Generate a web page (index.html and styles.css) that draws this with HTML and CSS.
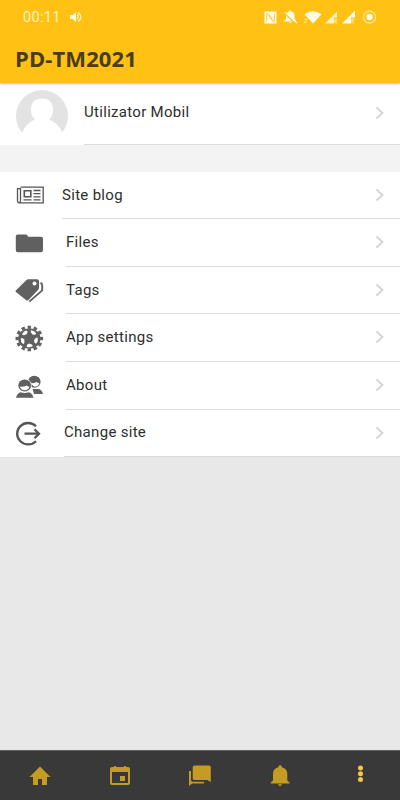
FILE: index.html
```
<!DOCTYPE html>
<html lang="en">
<head>
    <meta charset="UTF-8">
    <title>PD-TM2021</title>
    <link rel="stylesheet" href="styles.css">
</head>
<body>
    <svg class="defs">
        <symbol id="chevron" viewBox="0 0 10 14"><path d="M1.500 1.500 L7.500 7 L1.500 12.500" fill="none" stroke="#d3d3d3" stroke-width="1.700"/></symbol>
    </svg>

    <header>
        <div class="status-bar">
            <span class="clock">00:11</span>
            <svg class="volume" width="12" height="12" viewBox="0 0 12 12"><path d="M0 4h2.700L6 1v10L2.700 8H0z" fill="#fff8d8"/><path d="M7.300 3.600q2 2.400 0 4.800M8 1.200q5.800 4.800 0 9.600" fill="none" stroke="#fff8d8" stroke-width="1.200"/></svg>
            <svg class="system" width="116" height="16" viewBox="262 8 116 16">
                <g fill="#fffbe6">
                    <path d="M264.500 10.500h12v12h-12z"/>
                    <path d="M266.700 20.500v-7.600h1.600l4.600 6.500M274.400 12.600v7.700h-1.500l-4.600-6.500" fill="none" stroke="#ffc113" stroke-width=".8"/>
                    <path d="M284.500 20.500v-1l1.500-1.500v-3.500q.3-3.500 3.400-4v-.7q.9-.9 1.700 0v.7q3.200.5 3.500 4v3.500l1.500 1.500v1zM289 21h3q-1.500 2.200-3 0z"/>
                    <path d="M284.600 12.200l11 10.500" stroke="#ffc113" stroke-width="1.200"/>
                    <path d="M285 11.200l12 11" stroke="#fffbe6" stroke-width="1.100"/>
                    <path d="M304.500 13.300q8.500-6 17 0L313 22.500z"/>
                    <path d="M304.200 18.200h3l-3 3.500h3" fill="none" stroke="#ffe68a"/>
                    <path d="M325 22.500l12-12v6h-3v6z" opacity=".85"/>
                    <path d="M342 22.500l13-13v7h-4v6z"/>
                    <path d="M334.900 22.500v-4.500h1.900v2h-1.900l2 2.500M351.900 22.500v-4.500h1.900v2h-1.900l2 2.500" fill="none" stroke="#ffe99a" stroke-width=".9"/>
                    <circle cx="369.500" cy="16" r="3.200"/>
                    <circle cx="369.500" cy="16" r="6" fill="none" stroke="#ffe68a" stroke-width="1.300"/>
                </g>
            </svg>
        </div>
        <h1>PD-TM2021</h1>
    </header>

    <main>
        <a class="profile">
            <svg class="avatar" width="52" height="52" viewBox="0 0 52 52">
                <circle cx="26" cy="26" r="26" fill="#e3e3e3"/>
                <path d="M15 20q0-11.500 11-11.500T37 20q0 6.500-4 9.500 9 3 13 12.500V52H6V43q4-10 13-13.500-4-3-4-9.500z" fill="#fff"/>
            </svg>
            <span class="label">Utilizator Mobil</span>
            <svg class="chevron" width="10" height="14"><use href="#chevron"/></svg>
        </a>

        <nav class="menu">
            <a class="item blog">
                <svg width="30" height="28" viewBox="0 0 30 28">
                    <path d="M5.500 5.200h22.700v15.600H4.500q-2 0-2-2V6.700h3v12q0 2-1.200 2.100" fill="none" stroke="#555" stroke-width="1.300"/>
                    <path d="M9.300 8.800h6.500v6H9.300z" fill="none" stroke="#555" stroke-width="1.600"/>
                    <path d="M18.500 8.500h7M18.500 11.700h7M18.500 14.800h7M8.500 17.900h8M18.500 17.900h7" stroke="#555" stroke-width="1.300"/>
                </svg>
                <span class="label">Site blog</span>
                <svg class="chevron" width="10" height="14"><use href="#chevron"/></svg>
            </a>
            <a class="item">
                <svg width="30" height="28" viewBox="0 0 30 28"><path d="M.8 7.500q0-2 2-2h8q1.700 0 2.200 2.300h13q2 0 2 2v11.500q0 2-2 2H2.800q-2 0-2-2z" fill="#606060"/></svg>
                <span class="label">Files</span>
                <svg class="chevron" width="10" height="14"><use href="#chevron"/></svg>
            </a>
            <a class="item">
                <svg width="30" height="28" viewBox="0 0 30 28">
                    <path d="M.8 13.500L11.500 3q.8-.8 2-.8h8.500q2 0 2 2v6.500q0 1.200-.8 2L13.500 23q-1.300 1.100-2.500 0L.9 15q-.8-.8-.1-1.500z" fill="#606060"/>
                    <circle cx="19.500" cy="6.500" r="2" fill="#fff"/>
                    <path d="M25.400 6q1.800.4 1.800 2.400v5L14.300 24.600" fill="none" stroke="#606060" stroke-width="1.900"/>
                </svg>
                <span class="label">Tags</span>
                <svg class="chevron" width="10" height="14"><use href="#chevron"/></svg>
            </a>
            <a class="item">
                <svg width="30" height="28" viewBox="0 0 30 28">
                    <ellipse cx="14.300" cy="14.500" rx="12.300" ry="11.300" pathLength="120" fill="none" stroke="#606060" stroke-width="3" stroke-dasharray="5.500 4.500" stroke-dashoffset="2.750"/>
                    <ellipse cx="14.300" cy="14.500" rx="11.200" ry="10.300" fill="#606060"/>
                    <g fill="#fff">
                        <path id="gear-hole" d="M15.800 6.300q3.900.3 5.300 3-.2 1.300-1.400 1.500l-2.200-.2-1.700-2.400z"/>
                        <use href="#gear-hole" transform="rotate(72 14.300 14.500)"/>
                        <use href="#gear-hole" transform="rotate(144 14.300 14.500)"/>
                        <use href="#gear-hole" transform="rotate(216 14.300 14.500)"/>
                        <use href="#gear-hole" transform="rotate(288 14.300 14.500)"/>
                    </g>
                </svg>
                <span class="label">App settings</span>
                <svg class="chevron" width="10" height="14"><use href="#chevron"/></svg>
            </a>
            <a class="item">
                <svg width="30" height="28" viewBox="0 0 30 28">
                    <g fill="#606060">
                        <ellipse cx="19.300" cy="9.700" rx="6.300" ry="6"/>
                        <path d="M17.500 17h6.500q3 1 4 5H19z"/>
                    </g>
                    <path d="M15 11q5 .5 6.500-1 1 1 2.700 1-.5 3.500-4.900 3.700" fill="#fff"/>
                    <ellipse cx="9.700" cy="13.500" rx="7.100" ry="6.800" fill="#fff"/>
                    <ellipse cx="9.700" cy="13.500" rx="6.400" ry="6.100" fill="#606060"/>
                    <path d="M4.900 14.800q5.100 0 6.800-1.200 1 1.200 2.800 1.200-.8 3.400-4.800 3.400t-4.800-3.400z" fill="#fff"/>
                    <path d="M1 25.700q1-4.500 4.500-5.500 4.200 1.600 8.400 0 3.600 1 4.600 5.500z" fill="#606060"/>
                </svg>
                <span class="label">About</span>
                <svg class="chevron" width="10" height="14"><use href="#chevron"/></svg>
            </a>
            <a class="item change">
                <svg width="30" height="28" viewBox="0 0 30 28">
                    <path d="M21 6.200A11 10.700 0 1 0 21 21.200" fill="none" stroke="#555" stroke-width="2.300"/>
                    <path d="M9.500 13.700H24M19.500 9.200L24 13.700l-4.500 4.500" fill="none" stroke="#555" stroke-width="2.300"/>
                </svg>
                <span class="label">Change site</span>
                <svg class="chevron" width="10" height="14"><use href="#chevron"/></svg>
            </a>
        </nav>
    </main>

    <footer>
        <a><svg width="24" height="24" viewBox="0 0 24 24"><path d="M10 21v-6h4v6h5v-8h3.500L12 2.500 1.500 13H5v8z"/></svg></a>
        <a><svg width="24" height="24" viewBox="0 0 24 24"><path d="M17 12h-5v5h5zM16 2v1H8V2H6v1H4q-2 0-2 2v14q0 2 2 2h16q2 0 2-2V5q0-2-2-2h-2V2zm4 17H4V8h16z"/></svg></a>
        <a><svg width="24" height="24" viewBox="0 0 24 24"><path d="M6.500 1.500H21q1.800 0 1.800 1.800v15L19.500 16h-13q-1.800 0-1.800-1.800V3.300q0-1.800 1.800-1.800z"/><path d="M1 7h2v9q0 1.800 1.800 1.800H16v1.800H4L1 22z"/></svg></a>
        <a><svg width="24" height="24" viewBox="0 0 24 24"><path d="M10 20.300h4q-.3 1.800-2 1.800t-2-1.800zM19.300 16.500V10q0-5.500-5.500-6.800v-.7Q13.500 1.200 12.100 1.200t-1.700 1.300v.7Q5 4.500 5 10v6.500l-2.300 2v1h18.800v-1z"/></svg></a>
        <a class="active"><svg width="24" height="24" viewBox="0 0 24 24"><circle cx="12.500" cy="4" r="2.500"/><circle cx="12.500" cy="9.700" r="2.500"/><circle cx="12.500" cy="15.400" r="2.500"/></svg></a>
    </footer>
</body>
</html>
```
FILE: styles.css
```
* { box-sizing: border-box; }
body {
    display: flex;
    flex-direction: column;
    height: 800px;
    margin: 0;
    background: #e8e8e8;
    color: #2e2e2e;
    font-family: Roboto, sans-serif;
}
.defs { display: none; }

header { height: 83px; background: #ffc113; box-shadow: 0 1px 2px rgba(0, 0, 0, .25); z-index: 1; }
.status-bar { display: flex; align-items: center; height: 32px; padding: 1px 22px 0 23px; }
.clock { width: 47px; padding-top: 1px; color: #fff3bd; font-size: 14.5px; letter-spacing: .35px; }
.system { margin-left: auto; }
h1 {
    margin: 11px 0 0 15px;
    color: #493d18;
    font: bold 22px/30px "Open Sans", sans-serif;
    letter-spacing: .1px;
}

.profile { display: flex; height: 62px; padding-left: 16px; background: #fff; }
.avatar { margin: 7px 16px 0 0; }
.label {
    display: flex;
    flex: 1;
    align-items: center;
    border-bottom: 1px solid #dcdcdc;
    font-size: 15px;
    letter-spacing: .3px;
}
.profile .label { padding-bottom: 3px; }
.chevron { box-sizing: content-box; height: 14px; padding-right: 15px; border-bottom: 1px solid #dcdcdc; }
.profile .chevron { padding-top: 23px; padding-bottom: 24px; }

.menu {
    display: grid;
    grid-template-rows: 47px 48px 47px 48px 48px 47px;
    border-top: 27px solid #f3f3f3;
    background: #fff;
}
.item { display: flex; padding-left: 15px; }
.item svg:first-child { margin: 10px 21px 0 0; }
.item.blog svg:first-child { margin-right: 17px; }
.item.change svg:first-child { margin-right: 19px; }
.item .label { padding-bottom: 1px; }
.item.change .label { padding-bottom: 3px; }
.item .chevron { padding-top: 16px; padding-bottom: 16px; }
.item:nth-child(even) .chevron, .item:nth-child(5) .chevron { padding-bottom: 17px; }
.item:last-child .chevron { padding-bottom: 16px; }

footer {
    display: grid;
    grid-template-columns: repeat(5, 1fr);
    height: 50px;
    margin-top: auto;
    border-top: 1px solid #606060;
    background: #393939;
}
footer a { display: flex; justify-content: center; padding-top: 13px; }
footer svg { fill: #c49b23; }
footer .active svg { fill: #f3c842; }
```
